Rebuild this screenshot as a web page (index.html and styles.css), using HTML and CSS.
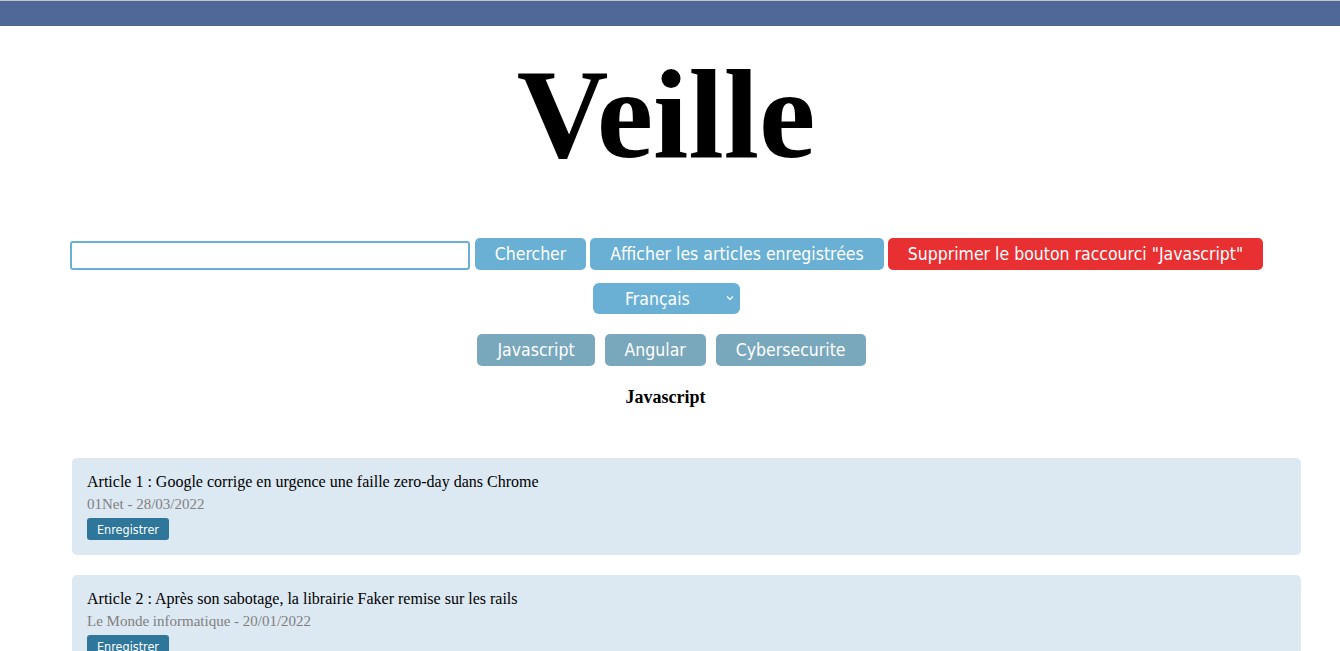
FILE: index.html
```html
<!DOCTYPE html>
<html lang="fr">
<head>
<meta charset="utf-8">
<title>Veille</title>
<link rel="stylesheet" href="styles.css">
</head>
<body>
<header class="topbar"></header>
<h1 class="title">Veille</h1>
<div class="search-row">
  <input class="search-input" type="text">
  <button class="btn btn-blue">Chercher</button>
  <button class="btn btn-blue">Afficher les articles enregistrées</button>
  <button class="btn btn-red">Supprimer le bouton raccourci "Javascript"</button>
</div>
<div class="lang-row">
  <div class="select-wrap">
    <select class="lang-select"><option>Français</option></select>
    <svg class="chevron" width="8" height="6" viewBox="0 0 8 6"><path d="M1 1.5 L4 4.5 L7 1.5" fill="none" stroke="#ffffff" stroke-width="1.2"/></svg>
  </div>
</div>
<div class="tags-row">
  <button class="btn btn-tag">Javascript</button>
  <button class="btn btn-tag">Angular</button>
  <button class="btn btn-tag">Cybersecurite</button>
</div>
<h2 class="section-title">Javascript</h2>
<main class="articles">
  <article class="card">
    <div class="card-title">Article 1 : Google corrige en urgence une faille zero-day dans Chrome</div>
    <div class="card-meta">01Net - 28/03/2022</div>
    <button class="btn-save">Enregistrer</button>
  </article>
  <article class="card">
    <div class="card-title">Article 2 : Après son sabotage, la librairie Faker remise sur les rails</div>
    <div class="card-meta">Le Monde informatique - 20/01/2022</div>
    <button class="btn-save">Enregistrer</button>
  </article>
</main>
</body>
</html>
```
FILE: styles.css
```css
html, body {
  margin: 0;
  padding: 0;
  background: #ffffff;
  font-family: "Liberation Serif", "Times New Roman", serif;
}

.topbar {
  height: 25px;
  background: #4f6898;
  border-top: 1px solid #c4c4c4;
}

.title {
  margin: 16px 0 0 0;
  text-align: center;
  font-family: "Liberation Serif", serif;
  font-weight: bold;
  font-size: 127px;
  line-height: 144px;
  color: #000;
  padding-right: 8px;
}

.search-row {
  margin-top: 52px;
  display: flex;
  justify-content: center;
  align-items: flex-end;
  gap: 4px;
  padding-right: 7px;
}

.search-input {
  box-sizing: border-box;
  width: 400px;
  height: 29px;
  border: 2px solid #6ab0d4;
  border-radius: 3px;
  margin: 0 1px 0 0;
  padding: 0 4px;
  background: #fff;
}

.btn {
  box-sizing: border-box;
  height: 32px;
  border: none;
  border-radius: 5px;
  padding: 0 20px;
  color: #ffffff;
  font-family: "DejaVu Sans Condensed", "Liberation Sans", sans-serif;
  font-size: 17.5px;
  cursor: pointer;
}

.btn-blue { background: #6ab0d4; }
.btn-red { background: #e83032; }
.btn-tag { background: #79a7bc; }

.lang-row {
  margin-top: 13px;
  display: flex;
  justify-content: center;
  padding-right: 7px;
}

.select-wrap {
  position: relative;
  width: 147px;
  height: 31px;
}

.lang-select {
  appearance: none;
  -webkit-appearance: none;
  box-sizing: border-box;
  width: 147px;
  height: 31px;
  border: none;
  border-radius: 6px;
  background: #6ab0d4;
  color: #ffffff;
  font-family: "DejaVu Sans Condensed", "Liberation Sans", sans-serif;
  font-size: 17.5px;
  padding: 0 0 0 32px;
}

.chevron {
  position: absolute;
  right: 6px;
  top: 12px;
}

.tags-row {
  margin-top: 20px;
  display: flex;
  justify-content: center;
  gap: 10px;
  padding-left: 3px;
}

.section-title {
  margin: 20px 0 0 0;
  text-align: center;
  font-size: 18px;
  line-height: 22px;
  font-weight: bold;
  padding-right: 9px;
}

.articles {
  margin-top: 50px;
  padding: 0 39px 0 72px;
  display: flex;
  flex-direction: column;
  gap: 20px;
}

.card {
  background: #dce8f2;
  border-radius: 5px;
  padding: 14px 15px 15px 15px;
}

.card-title {
  font-size: 16px;
  line-height: 20px;
  color: #000;
}

.card-meta {
  font-size: 15px;
  line-height: 20px;
  color: #808080;
  margin-top: 2px;
}

.btn-save {
  margin-top: 4px;
  display: block;
  height: 22px;
  border: none;
  border-radius: 3px;
  padding: 0 10px;
  background: #2e779a;
  color: #ffffff;
  font-family: "DejaVu Sans Condensed", "Liberation Sans", sans-serif;
  font-size: 12.5px;
}
```
